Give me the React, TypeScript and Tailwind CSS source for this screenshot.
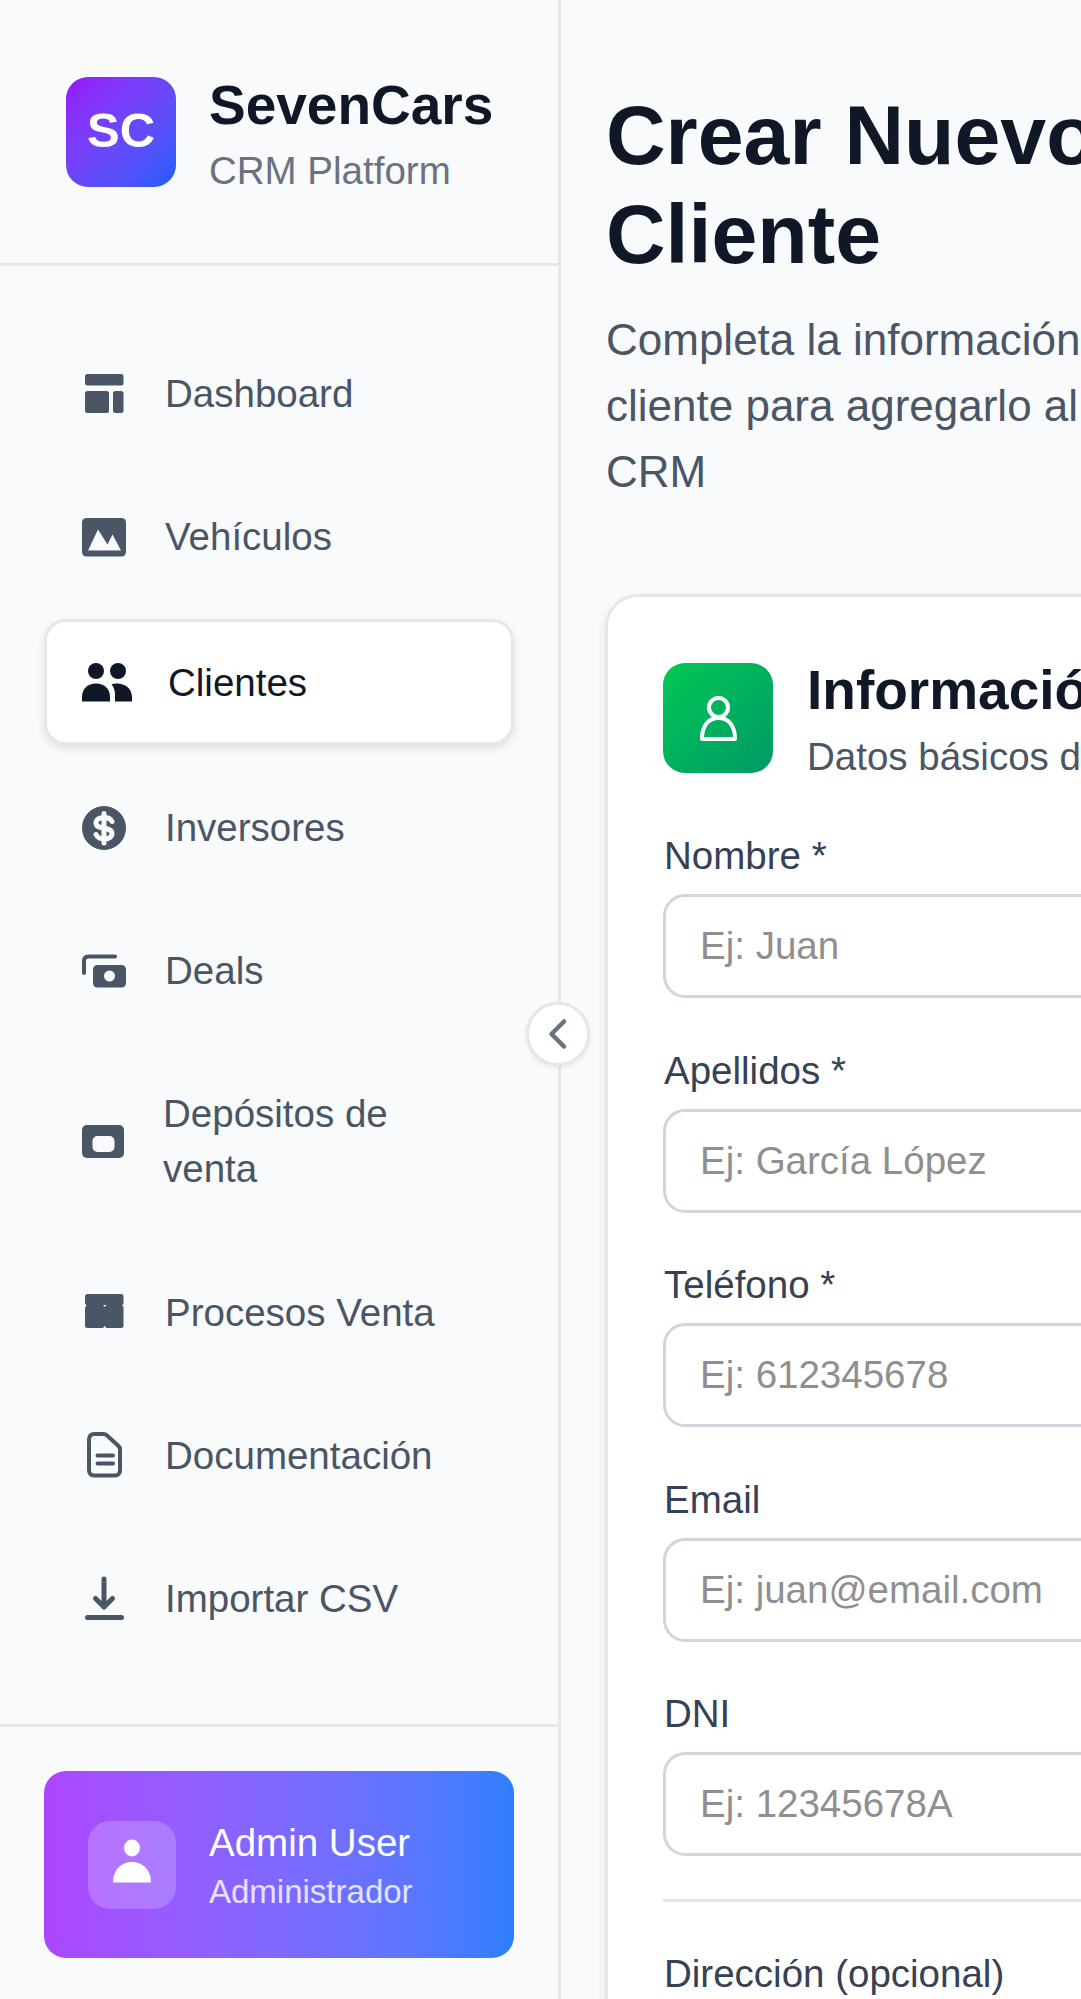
import type { ReactNode } from 'react'

const BG = '#f9fafb'

function DashboardIcon() {
  return (
    <svg width="44" height="40" viewBox="0 0 44 40" fill="currentColor">
      <rect x="3" y="0" width="38.5" height="11.5" rx="2.5" />
      <rect x="3" y="17" width="24" height="22" rx="2.5" />
      <rect x="31" y="17" width="10.5" height="22" rx="2.5" />
    </svg>
  )
}

function MountainIcon() {
  return (
    <svg width="44" height="40" viewBox="0 0 44 40" fill="currentColor">
      <rect x="0" y="1" width="44" height="38.5" rx="4.5" />
      <path d="M6 33.5 16 12.5 25.5 27.5 30.5 17.5 39 33.5Z" fill={BG} />
    </svg>
  )
}

function PeopleIcon() {
  return (
    <svg width="50" height="40" viewBox="0 0 50 40" fill="currentColor">
      <circle cx="14" cy="9" r="8" />
      <circle cx="36" cy="9" r="8" />
      <path d="M0 39.5V35C0 26.5 6 21.5 14 21.5 22 21.5 28 26.5 28 35V39.5Z" />
      <path d="M33 39.5V33C33 28 31.5 24.5 29.5 22.5 31 21.8 33 21.5 35 21.5 43 21.5 50 26.5 50 35V39.5Z" />
    </svg>
  )
}

function DollarIcon() {
  return (
    <svg width="44" height="44" viewBox="0 0 44 44">
      <circle cx="22" cy="22" r="22" fill="currentColor" />
      <path
        d="M30 15.5C28.5 12.5 25.5 11.5 22 11.5 17.5 11.5 14 13.5 14 17 14 24.5 30 20 30 27.5 30 31 26.5 33 22 33 18.5 33 15.5 31.5 14 28.5M22 7.5V37"
        fill="none"
        stroke={BG}
        strokeWidth="5"
        strokeLinecap="round"
      />
    </svg>
  )
}

function CashStackIcon() {
  return (
    <svg width="44" height="34" viewBox="0 0 44 34" fill="currentColor">
      <path d="M33 2.5H6.5C3.5 2.5 2 4 2 7V19" fill="none" stroke="currentColor" strokeWidth="4" strokeLinecap="round" />
      <rect x="11" y="11" width="33" height="22.5" rx="4.5" />
      <circle cx="27.5" cy="22" r="5.5" fill={BG} />
    </svg>
  )
}

function DepositIcon() {
  return (
    <svg width="42" height="33" viewBox="0 0 42 33" fill="currentColor">
      <rect x="0" y="0" width="42" height="33" rx="5" />
      <rect x="10.5" y="11" width="22" height="16" rx="5" fill={BG} />
    </svg>
  )
}

function BoxIcon() {
  return (
    <svg width="44" height="36" viewBox="0 0 44 36" fill="currentColor">
      <rect x="3" y="0" width="38.5" height="34" rx="2.5" />
      <path d="M3 9.5 4.5 11.5 3 13.5ZM41.5 9.5 40 11.5 41.5 13.5ZM21 11 24.5 11 22.7 13ZM21 34 22.7 32 24.5 34Z" fill={BG} />
    </svg>
  )
}

function DocumentIcon() {
  return (
    <svg width="44" height="46" viewBox="0 0 44 46" fill="none" stroke="currentColor" strokeWidth="4" strokeLinecap="round" strokeLinejoin="round">
      <path d="M12 2H21.5C23 2 24 2.5 25 3.5L36 13.5C37 14.5 38 15.5 38 17V38C38 41.5 36 43.5 33 43.5H12C9 43.5 7 41.5 7 38V7.5C7 4 9 2 12 2Z" />
      <path d="M15.5 23.5H31M15.5 31.5H31" />
    </svg>
  )
}

function ImportIcon() {
  return (
    <svg width="44" height="44" viewBox="0 0 44 44" fill="none" stroke="currentColor" strokeWidth="5" strokeLinecap="round" strokeLinejoin="round">
      <path d="M22 3V31M13.5 22.5 22 31 30.5 22.5" />
      <path d="M5.5 41.5H39.5" />
    </svg>
  )
}

type NavItem = {
  label: string
  icon: ReactNode
  active?: boolean
}

const navItems: NavItem[] = [
  { label: 'Dashboard', icon: <DashboardIcon /> },
  { label: 'Vehículos', icon: <MountainIcon /> },
  { label: 'Clientes', icon: <PeopleIcon />, active: true },
  { label: 'Inversores', icon: <DollarIcon /> },
  { label: 'Deals', icon: <CashStackIcon /> },
  { label: 'Depósitos de venta', icon: <DepositIcon /> },
  { label: 'Procesos Venta', icon: <BoxIcon /> },
  { label: 'Documentación', icon: <DocumentIcon /> },
  { label: 'Importar CSV', icon: <ImportIcon /> },
]

const fields = [
  { label: 'Nombre *', placeholder: 'Ej: Juan' },
  { label: 'Apellidos *', placeholder: 'Ej: García López' },
  { label: 'Teléfono *', placeholder: 'Ej: 612345678' },
  { label: 'Email', placeholder: 'Ej: juan@email.com' },
  { label: 'DNI', placeholder: 'Ej: 12345678A' },
]

function Sidebar() {
  return (
    <aside className="relative flex h-[1999px] w-[561px] shrink-0 flex-col border-r-[3px] border-[#e5e7eb] bg-[#f9fafb]">
      <div className="flex h-[266px] items-start gap-[33px] border-b-[3px] border-[#e5e7eb] px-[66px] pt-[77px]">
        <div className="flex h-[110px] w-[110px] shrink-0 items-center justify-center rounded-[22px] bg-gradient-to-br from-purple-600 to-blue-600 pb-[2px] text-[49px] font-bold text-white">
          SC
        </div>
        <div className="mt-[-5px]">
          <div className="text-[55px] leading-[66px] font-bold text-[#101828]">SevenCars</div>
          <div className="mt-[5px] text-[38.5px] leading-[55px] text-[#6a7282]">CRM Platform</div>
        </div>
      </div>

      <nav className="flex flex-1 flex-col gap-[22.1px] px-[44px] pt-[67px]">
        {navItems.map((item) => (
          <a
            key={item.label}
            className={
              item.active
                ? 'flex h-[126px] items-center gap-[36px] rounded-[22px] border-[3px] border-[#e5e7eb] bg-white pl-[35px] text-[38.5px] leading-[55px] text-[#101828] shadow-[0_4px_8px_rgba(0,0,0,0.1)]'
                : 'flex min-h-[120px] items-center gap-[39px] rounded-[22px] px-[38px] py-[33px] text-[38.5px] leading-[55px] text-[#4a5565]'
            }
          >
            <span className="flex shrink-0 items-center justify-center">{item.icon}</span>
            <span>{item.label}</span>
          </a>
        ))}
      </nav>

      <div className="h-[275px] border-t-[3px] border-[#e5e7eb] px-[44px] pt-[44px]">
        <div className="flex h-[187px] items-center gap-[33px] rounded-[22px] bg-gradient-to-r from-purple-500 to-blue-500 px-[44px]">
          <div className="flex h-[88px] w-[88px] shrink-0 items-center justify-center rounded-[22px] bg-white/20">
            <svg width="38" height="52" viewBox="0 0 38 52" fill="white">
              <ellipse cx="19" cy="9" rx="8" ry="8.5" />
              <path d="M0 43.5C0 31 8 23 19 23 30 23 38 31 38 43.5Z" />
            </svg>
          </div>
          <div>
            <div className="text-[38.5px] leading-[55px] text-white">Admin User</div>
            <div className="text-[33px] leading-[44px] text-white/80">Administrador</div>
          </div>
        </div>
      </div>

      <button className="absolute top-[1002px] left-[526px] flex h-[64px] w-[64px] items-center justify-center rounded-full border-[3px] border-[#e5e7eb] bg-white shadow-[0_2px_5px_rgba(0,0,0,0.08)]">
        <svg width="24" height="34" viewBox="0 0 24 34" fill="none" stroke="#6a7282" strokeWidth="4.5" strokeLinecap="round" strokeLinejoin="round">
          <path d="M18 4.5 5.5 17 18 29.5" />
        </svg>
      </button>
    </aside>
  )
}

function Field({ label, placeholder }: { label: string; placeholder: string }) {
  return (
    <div>
      <label className="mb-[11px] block pl-[1px] text-[38.5px] leading-[55px] text-[#364153]">{label}</label>
      <input
        placeholder={placeholder}
        className="block h-[104px] w-full rounded-[22px] border-[3px] border-[#d1d5dc] bg-white px-[34px] text-[38.5px] placeholder:text-[#8f8f8f]"
      />
    </div>
  )
}

export default function App() {
  return (
    <div className="flex h-[1999px] w-[1081px] overflow-hidden bg-[#f9fafb] font-['Liberation_Sans',Arial,sans-serif]">
      <Sidebar />
      <main className="w-[1000px] shrink-0 px-[45px] pt-[86px]">
        <h1 className="w-[640px] text-[82.5px] leading-[99px] font-bold text-[#101828]">Crear Nuevo Cliente</h1>
        <p className="mt-[23px] w-[570px] text-[44px] leading-[66px] text-[#4a5565]">
          Completa la información del cliente para agregarlo al CRM
        </p>

        <section className="mt-[89px] ml-[-1px] w-[900px] rounded-[33px] border-[3px] border-[#e5e7eb] bg-white px-[55px] pt-[55px] pb-[55px] shadow-[0_4px_10px_rgba(0,0,0,0.1)]">
          <div className="mb-[44px] flex h-[132px] items-center gap-[34px]">
            <div className="flex h-[110px] w-[110px] shrink-0 items-center justify-center rounded-[22px] bg-gradient-to-br from-green-500 to-emerald-600">
              <svg width="37" height="45" viewBox="0 0 37 45" fill="none" stroke="white" strokeWidth="4" strokeLinejoin="round">
                <circle cx="18.5" cy="11.5" r="9.5" />
                <path d="M2 43C2 29 9 22 18.5 22 28 22 35 29 35 43Z" />
              </svg>
            </div>
            <div>
              <h2 className="text-[55px] leading-[77px] font-bold text-[#101828]">Información Personal</h2>
              <p className="text-[38.5px] leading-[55px] text-[#4a5565]">Datos básicos del cliente</p>
            </div>
          </div>

          <div className="flex flex-col gap-[44.5px]">
            {fields.map((f) => (
              <Field key={f.label} label={f.label} placeholder={f.placeholder} />
            ))}
          </div>

          <div className="mt-[42.5px] border-t-[3px] border-[#e5e7eb] pt-[44.5px]">
            <Field label="Dirección (opcional)" placeholder="Ej: Calle Mayor 1" />
          </div>
        </section>
      </main>
    </div>
  )
}
